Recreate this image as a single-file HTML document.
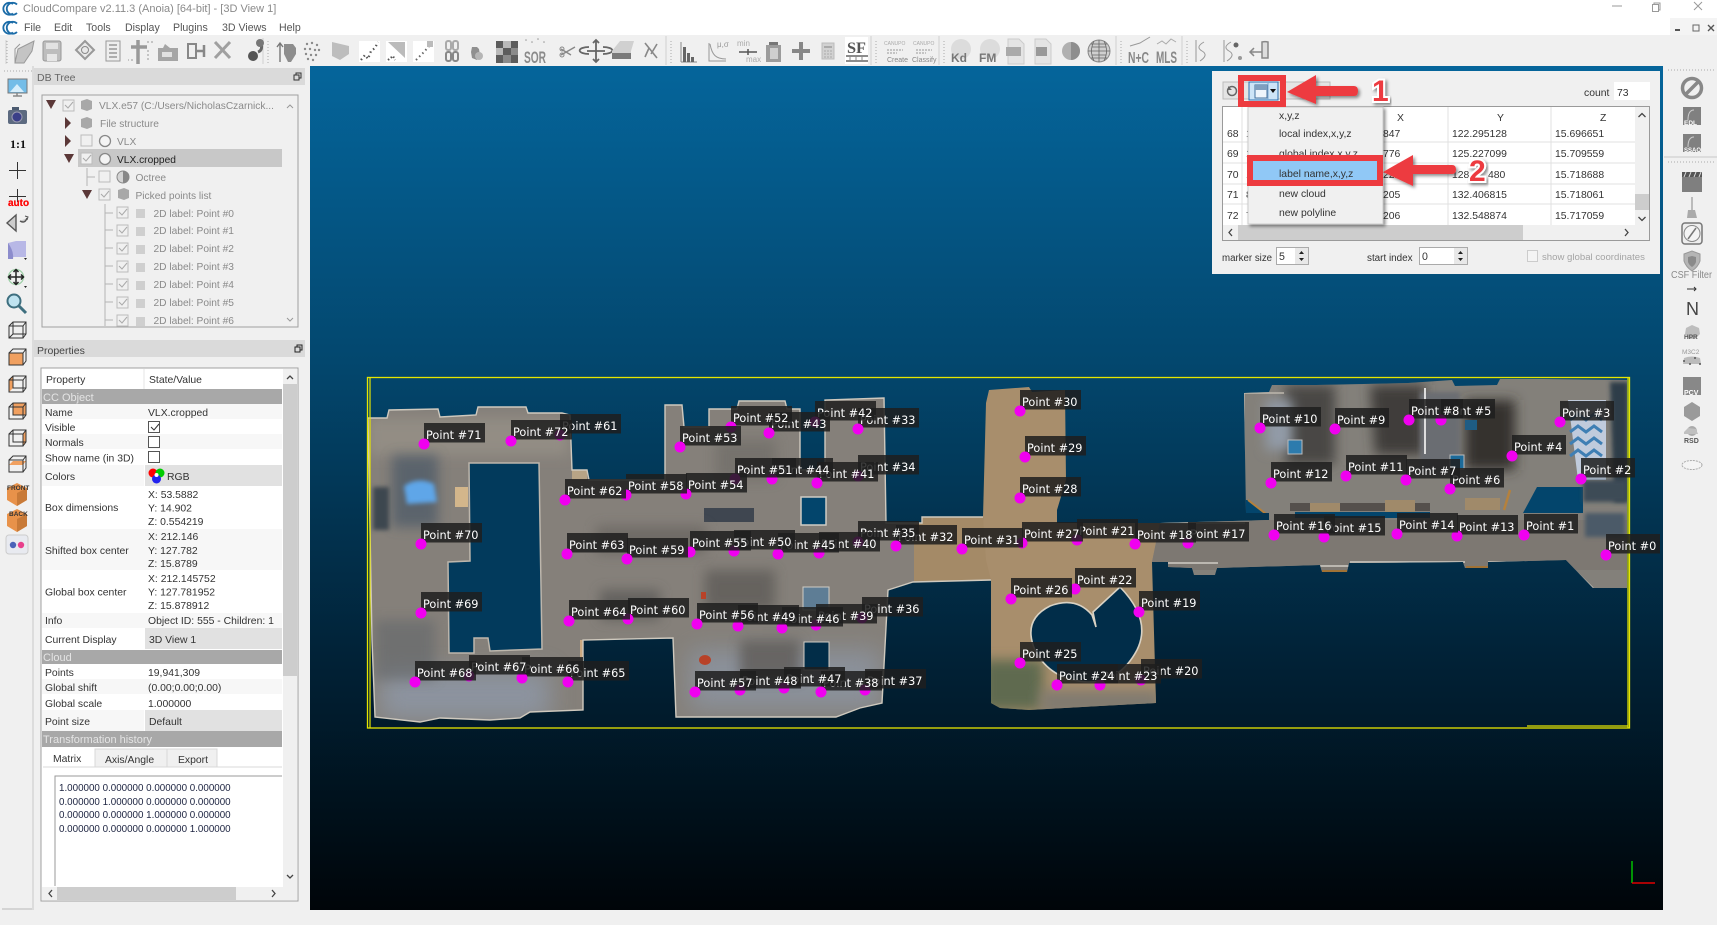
<!DOCTYPE html>
<html><head><meta charset="utf-8"><title>CloudCompare</title>
<style>
html,body{margin:0;padding:0;background:#f0f0f0;overflow:hidden}
svg{display:block;position:absolute;left:0;top:0}
text{font-family:"Liberation Sans",sans-serif;font-size:10.4px;fill:#333;white-space:pre}
.g{fill:#8c8c8c}.t{fill:#2a2a2a}
.m{font-size:10.6px;fill:#555}
.tr{font-size:10.2px;fill:#8a8a8a}
.sec{fill:#e4e4e4;font-size:11px}
.n{font-size:9.7px;fill:#333}
.d{font-size:10.6px;fill:#333}
.l text{font-family:"DejaVu Sans","Liberation Sans",sans-serif;font-size:11.3px;fill:#fff}
.l rect{fill:#1e1e1e;fill-opacity:.86}
.l circle{fill:#f000f0}
.i text{fill:#8a8a8a;font-weight:bold}
</style></head><body>
<svg width="1717" height="925" viewBox="0 0 1717 925" xmlns="http://www.w3.org/2000/svg">
<defs>
<linearGradient id="bg" x1="0" y1="0" x2="0" y2="1"><stop offset="0" stop-color="#05659b"/><stop offset=".35" stop-color="#03476e"/><stop offset=".7" stop-color="#012237"/><stop offset="1" stop-color="#000509"/></linearGradient>
<filter id="b2" x="-30%" y="-30%" width="160%" height="160%"><feGaussianBlur stdDeviation="2"/></filter>
<filter id="b6" x="-50%" y="-50%" width="200%" height="200%"><feGaussianBlur stdDeviation="6"/></filter>
<filter id="b12" x="-50%" y="-50%" width="200%" height="200%"><feGaussianBlur stdDeviation="12"/></filter>
<filter id="sh" x="-10%" y="-10%" width="125%" height="125%"><feDropShadow dx="2" dy="2" stdDeviation="1.5" flood-color="#000" flood-opacity=".45"/></filter>
<clipPath id="fl"><path d="M368 418L387 418 389 410 438 409 440 417 476 415 478 407 526 407 528 413 562 413 570 415 572 470 587 470 589 480 665 480 665 405 682 405 684 427 709 427 709 409 737 409 739 401 785 401 787 409 800 409 800 470 825 470 825 400 884 398 886 523 922 523 922 517 983 517 991 580 913 582 888 590 882 703 860 708 836 717 747 717 676 717 673 638 583 640 583 710 530 712 520 718 490 720 440 718 420 722 375 717 372 640Z"/></clipPath>
<clipPath id="tan"><path d="M986 403L989 390 1029 387 1032 392 1065 390 1066 480 1057 510 1057 523 1160 523 1160 562 1152 562 1156 703 1100 706 1029 710 1000 708 991 703 991 580 986 560 983 517Z"/></clipPath>
<clipPath id="rg"><path d="M1244 393L1269 392 1272 385 1316 385 1408 383 1452 380 1455 386 1497 385 1500 379 1543 379 1627 380 1627 588 1593 588 1566 560 1488 562 1488 568 1465 568 1463 562 1349 563 1347 572 1322 572 1320 565 1217 568 1215 575 1194 575 1192 568 1168 567 1168 562 1152 562 1160 523 1269 520 1269 513 1246 513Z"/></clipPath>
</defs>

<!-- window chrome -->
<rect x="0" y="0" width="1717" height="35" fill="#fff"/>
<rect x="0" y="35" width="1717" height="31" fill="#f0f0f0"/>
<path d="M15 4a6 6 0 1 0 0 9.500M19 4.500a6 6 0 1 0 0 8.500" fill="none" stroke="#1b6ca8" stroke-width="1.800" transform="translate(-2 0)"/>
<text x="23" y="12" style="font-size:11px;fill:#8a8a8a">CloudCompare v2.11.3 (Anoia) [64-bit] - [3D View 1]</text>
<path d="M15 23a6 6 0 1 0 0 9.500M19 23.500a6 6 0 1 0 0 8.500" fill="none" stroke="#1b6ca8" stroke-width="1.800" transform="translate(-2 0)"/>
<text class="m" x="24" y="31">File</text><text class="m" x="54" y="31">Edit</text><text class="m" x="86" y="31">Tools</text><text class="m" x="125" y="31">Display</text><text class="m" x="173" y="31">Plugins</text><text class="m" x="222" y="31">3D Views</text><text class="m" x="279" y="31">Help</text>
<path d="M1612 6h10" stroke="#999"/><rect x="1654" y="3" width="6" height="7" fill="none" stroke="#999"/><rect x="1652.500" y="4.500" width="6" height="7" fill="#fff" stroke="#999"/><path d="M1694 2l8 8M1702 2l-8 8" stroke="#999"/>
<rect x="1670" y="18" width="47" height="17" fill="#f4f4f4"/>
<path d="M1675 30h5" stroke="#555" stroke-width="2"/><rect x="1693" y="25" width="6" height="6" fill="none" stroke="#666"/><path d="M1708 25l6 6M1714 25l-6 6" stroke="#555" stroke-width="1.400"/>

<!-- top toolbar icons -->
<g class="i" fill="#a8a8a8" stroke="none">
<path d="M6 40v24M263 38v26M666 36v29M871 36v29M939 36v29M1116 36v29M1182 36v29" stroke="#d0d0d0"/>
<path d="M7 41v23M268 41v23M671 41v23M876 41v23M944 41v23M1121 41v23M1187 41v23" stroke="#aaa" stroke-dasharray="1 2"/>
<path d="M15 63l3-14 16-8 -2 10 -8 12z" fill="#c4c4c4" stroke="#999"/><path d="M15 63v-14l5-5" fill="none" stroke="#999"/>
<rect x="43" y="41" width="18" height="20" rx="2" fill="#bdbdbd" stroke="#999"/><rect x="46" y="43" width="12" height="6" fill="#e2e2e2"/><rect x="47" y="54" width="10" height="7" fill="#e6e6e6"/>
<path d="M85 41l9 9-9 9-9-9z" fill="#e8e8e8" stroke="#999" stroke-width="2"/><circle cx="85" cy="50" r="3.500" fill="none" stroke="#888"/>
<rect x="106" y="41" width="14" height="20" fill="#eee" stroke="#999"/><path d="M109 45h8M109 49h8M109 53h8M109 57h8" stroke="#888" stroke-width="1.300"/>
<path d="M138 40v24M131 47h16" stroke="#999" stroke-width="3.500"/><path d="M133 60h-5M147 42h6M148 60v-10" stroke="#999" stroke-dasharray="2 2"/>
<path d="M158 48h5l2-4 5 4h8v13h-20z" fill="#a5a5a5"/><rect x="162" y="52" width="10" height="5" fill="#e0e0e0"/>
<rect x="188" y="44" width="8" height="14" fill="none" stroke="#888" stroke-width="2"/><path d="M197 51h7M204 45v12" stroke="#888" stroke-width="2.500"/>
<path d="M215 42l15 16M230 42l-15 16" stroke="#a0a0a0" stroke-width="3"/>
<circle cx="253" cy="56" r="5" fill="#555"/><path d="M258 52q6-2 2-12" fill="none" stroke="#666" stroke-width="3"/><circle cx="260" cy="43" r="4" fill="#777"/>
<path d="M280 62V44M277 47l3-4 3 4" stroke="#777" stroke-width="1.400" fill="none"/><path d="M284 44h9l3 4v6l-5 8h-3l-4-8z" fill="#8d8d8d"/>
<g fill="#8a8a8a"><circle cx="307" cy="44" r="1.200"/><circle cx="312" cy="43" r="1.200"/><circle cx="317" cy="45" r="1.200"/><circle cx="305" cy="49" r="1.200"/><circle cx="310" cy="49" r="1.200"/><circle cx="315" cy="50" r="1.200"/><circle cx="319" cy="50" r="1.200"/><circle cx="306" cy="54" r="1.200"/><circle cx="311" cy="55" r="1.200"/><circle cx="316" cy="55" r="1.200"/><circle cx="308" cy="59" r="1.200"/><circle cx="313" cy="60" r="1.200"/></g>
<path d="M332 42l17 4v8l-9 6-8-4z" fill="#bdbdbd"/>
<rect x="359" y="41" width="21" height="21" fill="#fff"/><path d="M361 60l4-5 3 4 3-8 4-3 3-6" stroke="#555" stroke-width="2.200" stroke-dasharray="1.500 3" fill="none"/>
<rect x="386" y="41" width="21" height="21" fill="#fff"/><path d="M388 42l17 16V42z" fill="#bbb"/><path d="M388 60l5-4 2 4" stroke="#555" stroke-width="2" stroke-dasharray="1.500 2" fill="none"/>
<rect x="413" y="41" width="21" height="21" fill="#fff"/><path d="M416 60l7-7 8-9" stroke="#666" stroke-dasharray="1.500 3" stroke-width="2" fill="none"/><rect x="427" y="41" width="6" height="6" fill="#bbb"/>
<rect x="446" y="41" width="5" height="9" fill="none" stroke="#aaa" stroke-width="2" rx="2"/><rect x="453" y="41" width="5" height="9" fill="none" stroke="#aaa" stroke-width="2" rx="2"/><rect x="446" y="52" width="5" height="9" fill="none" stroke="#888" stroke-width="2" rx="2"/><rect x="453" y="52" width="5" height="9" fill="none" stroke="#888" stroke-width="2" rx="2"/>
<path d="M472 47h5l2 2 1 6-3 5-5-2-1-6z" fill="#8f8f8f"/><circle cx="479" cy="56" r="4" fill="#b5b5b5"/>
<rect x="496" y="41" width="22" height="22" fill="#8a8a8a"/><g fill="#5c5c5c"><rect x="496" y="41" width="7" height="7"/><rect x="511" y="41" width="7" height="7"/><rect x="503" y="48" width="8" height="7"/><rect x="496" y="55" width="7" height="8"/><rect x="511" y="55" width="7" height="8"/></g><g fill="#b9b9b9"><rect x="503" y="41" width="8" height="7"/><rect x="496" y="48" width="7" height="7"/></g>
<g fill="#999"><circle cx="526" cy="40" r=".8"/><circle cx="532" cy="42" r=".8"/><circle cx="538" cy="39" r=".8"/><circle cx="544" cy="42" r=".8"/></g>
<text x="524" y="63" style="font-size:17px;fill:#8a8a8a" textLength="22" lengthAdjust="spacingAndGlyphs">SOR</text>
<path d="M561 55l14-8M561 49l10 6" stroke="#888" stroke-width="1.400" fill="none"/><circle cx="562" cy="49" r="2" fill="none" stroke="#888"/><circle cx="562" cy="55" r="2" fill="none" stroke="#888"/>
<path d="M596 40v21M587 51h18M593 43l3-3 3 3M593 59l3 3 3-3M589 47a8 3 0 0 0 0 7M603 47a8 3 0 0 1 0 7" stroke="#666" stroke-width="1.800" fill="none"/>
<path d="M612 51l8-10h14l-3 10v8h-19z" fill="#d0d0d0"/><path d="M612 53h19v6h-19z" fill="#7a7a7a"/>
<path d="M645 43l12 15M651 54l6-10M649 48l-4 9" stroke="#888" stroke-width="1.600" fill="none"/>
<path d="M681 42v20M681 62h16" stroke="#888" fill="none"/><path d="M683 62V47h3v15zM687 62v-9h3v9zM691 62v-5h3v5z" fill="#666"/>
<path d="M709 43v18h17M710 44c2 11 6 15 16 15" stroke="#999" fill="none"/><text x="717" y="47" style="font-size:8px;font-weight:400;fill:#999">μ,σ</text>
<text x="737" y="46" style="font-size:8px;font-weight:400;fill:#aaa">min</text><path d="M739 52h18M748 49v6" stroke="#555" stroke-width="1.500"/><text x="746" y="62" style="font-size:8px;font-weight:400;fill:#aaa">max</text>
<rect x="766" y="45" width="15" height="17" fill="#9c9c9c"/><rect x="769" y="42" width="9" height="3" fill="#777"/><rect x="770" y="48" width="8" height="11" fill="#cfcfcf"/>
<path d="M801 42v18M792 51h18" stroke="#888" stroke-width="4"/>
<rect x="822" y="43" width="12" height="16" fill="#d2d2d2" stroke="#bbb"/><path d="M824 47h8" stroke="#aaa" stroke-width="2"/><path d="M824 51h8M824 54h8M824 57h8" stroke="#aaa" stroke-dasharray="2 1"/>
<rect x="845" y="37" width="23" height="27" fill="#fff"/><text x="847" y="53" style="font:bold 16px 'Liberation Serif',serif;fill:#555" textLength="19" lengthAdjust="spacingAndGlyphs">SF</text><path d="M846 56h22M846 61h22" stroke="#666" stroke-width="1.500"/><path d="M850 56v5M856 56v5M862 56v5" stroke="#888"/>
<text x="884" y="45" style="font-size:5px;font-weight:400;fill:#aaa">CANUPO</text><text x="913" y="45" style="font-size:5px;font-weight:400;fill:#aaa">CANUPO</text>
<path d="M887 50h16M916 50h16M887 53h10M916 53h10" stroke="#999" stroke-dasharray="2 1"/>
<text x="887" y="62" style="font-size:7px;font-weight:400;fill:#888">Create</text><text x="912" y="62" style="font-size:7px;font-weight:400;fill:#888">Classify</text>
<circle cx="961" cy="49" r="10" fill="#dcdcdc"/><text x="951" y="62" style="font-size:12px;fill:#777">Kd</text>
<circle cx="990" cy="49" r="10" fill="#dcdcdc"/><text x="979" y="62" style="font-size:12px;fill:#777">FM</text>
<path d="M1008 39h11l5 5v20h-16z" fill="#e4e4e4" stroke="#ccc"/><rect x="1006" y="47" width="15" height="9" fill="#aaa"/>
<path d="M1035 39h11l5 5v20h-16z" fill="#e4e4e4" stroke="#ccc"/><rect x="1036" y="47" width="11" height="9" fill="#999"/>
<circle cx="1071" cy="51" r="9" fill="#b0b0b0"/><path d="M1071 42a9 9 0 0 1 0 18z" fill="#8e8e8e"/>
<circle cx="1099" cy="51" r="11" fill="#cfcfcf" stroke="#888"/><path d="M1088 51h22M1099 40v22M1091 44h16M1091 58h16M1092 47h14M1092 55h14M1094 41q-5 10 0 20M1104 41q5 10 0 20" stroke="#666" stroke-width=".8" fill="none"/>
<text x="1128" y="63" style="font-size:16px;fill:#888" textLength="21" lengthAdjust="spacingAndGlyphs">N+C</text><path d="M1130 46l10-3 10-6" stroke="#999" fill="none"/>
<text x="1156" y="63" style="font-size:17px;fill:#888" textLength="21" lengthAdjust="spacingAndGlyphs">MLS</text><path d="M1157 44l5-3 4 3 5-5 5 3" stroke="#aaa" fill="none"/>
<path d="M1196 40v22M1204 42q-9 5-2 9t-2 10" stroke="#999" fill="none"/>
<path d="M1224 40v22M1231 42q-9 5-2 9t-2 10" stroke="#999" fill="none"/><circle cx="1236" cy="45" r="2.500" fill="#666"/><circle cx="1240" cy="58" r="2" fill="#999"/>
<path d="M1262 42a6 2.500 0 0 1 6 0v16h-6zM1250 52h12M1254 48l-4 4 4 4" stroke="#888" fill="#ddd" stroke-width="1.500"/>
</g>

<!-- left toolbar -->
<path d="M33 66v844" stroke="#c8c8c8"/>
<path d="M4 71h28" stroke="#aaa" stroke-dasharray="1 2"/>
<g>
<rect x="8" y="79" width="19" height="14" fill="#74bde8" stroke="#777"/><path d="M10 92l7-8 7 8z" fill="#d7eefb"/><path d="M13 96h9M17 93v3" stroke="#888" stroke-width="1.500"/>
<rect x="8" y="110" width="19" height="14" rx="2" fill="#5c6a80"/><rect x="12" y="107" width="7" height="3" fill="#4b5a70"/><circle cx="17" cy="117" r="5" fill="#3a3f88" stroke="#9a9ab0"/>
<text x="10" y="148" style="font:bold 12px 'Liberation Serif',serif;fill:#111">1:1</text>
<path d="M17.500 162v17M9 170.500h17" stroke="#333"/>
<path d="M17.500 189v13M9 196.500h17" stroke="#333"/><text x="8" y="206" style="font-size:10px;font-weight:bold;fill:#f00;stroke:#f00;stroke-width:.2">auto</text>
<path d="M16 215v16l-9-8zM20 221q5 3 7-3" fill="#ccc" stroke="#555" stroke-width="1.400"/><path d="M25 216l3 1-1 3" fill="none" stroke="#555"/>
<path d="M8 243l8-2h10v16H8z" fill="#b8b8e6"/><path d="M8 243q6 8 5 16H8z" fill="#8c8ccc"/><path d="M24 258l3 0-1.500 2z" fill="#222"/>
<circle cx="16" cy="277" r="7.500" fill="#f0f0f0" stroke="#9fd0a8" stroke-width="1.300"/><path d="M16 270v15M9 277h15M13.500 272l2.500-2.500 2.500 2.500M13.500 282l2.500 2.500 2.500-2.500M11 274.500l-2.500 2.500 2.500 2.500M21 274.500l2.500 2.500-2.500 2.500" stroke="#222" stroke-width="1.500" fill="none"/><path d="M24 286l3 0-1.500 2z" fill="#222"/>
<circle cx="14" cy="301" r="6.500" fill="#bfe3f0" stroke="#3e6f7f" stroke-width="2"/><path d="M19 306l7 7" stroke="#3e6f7f" stroke-width="3"/>
<g fill="none" stroke="#333" stroke-width="1"><rect x="9" y="326" width="14" height="12"/><path d="M9 326l4-4h13v12l-3 4M23 326l3-4M13 322v12h13M13 334l-4 4"/></g>
<rect x="9" y="353" width="14" height="12" fill="#f0a060"/><g fill="none" stroke="#333"><rect x="9" y="353" width="14" height="12"/><path d="M9 353l4-4h13v12l-3 4M23 353l3-4"/></g>
<path d="M9 380l4-4v12l-4 4z" fill="#f0a060"/><g fill="none" stroke="#333"><rect x="9" y="380" width="14" height="12"/><path d="M9 380l4-4h13v12l-3 4M23 380l3-4M13 376v12h13"/></g>
<rect x="13" y="403" width="13" height="12" fill="#f0a060"/><g fill="none" stroke="#333"><rect x="9" y="407" width="14" height="12"/><path d="M9 407l4-4h13v12l-3 4M23 407l3-4M13 403v12h13"/></g>
<path d="M23 434l3-4v12l-3 4z" fill="#f0a060"/><g fill="none" stroke="#333"><rect x="9" y="434" width="14" height="12"/><path d="M9 434l4-4h13v12l-3 4M23 434l3-4M13 430v12h13"/></g>
<path d="M9 469l4-4h13l-3 4z" fill="#f0a060" transform="translate(0 -4)"/><g fill="none" stroke="#333"><rect x="9" y="460" width="14" height="12"/><path d="M9 460l4-4h13v12l-3 4M23 460l3-4"/></g>
<path d="M7 488l10-5 10 5v12l-10 6-10-6z" fill="#e8924a"/><path d="M17 493v13l10-6v-12z" fill="#c87a38"/><text x="7" y="490" style="font-size:6.500px;font-weight:bold;fill:#333">FRONT</text>
<path d="M7 514l10-5 10 5v12l-10 6-10-6z" fill="#e8924a"/><path d="M17 519v13l10-6v-12z" fill="#c87a38"/><text x="9" y="516" style="font-size:6.500px;font-weight:bold;fill:#333">BACK</text>
<rect x="6" y="535" width="22" height="19" rx="3" fill="#e8eaf0" stroke="#ccc"/><circle cx="13" cy="545" r="3.200" fill="#4a62b8"/><circle cx="21" cy="545" r="3.200" fill="#e8408c"/>
</g>

<!-- DB Tree -->
<rect x="34" y="68" width="271" height="17" fill="#dadada"/>
<text x="37" y="81" class="g" style="font-size:10.500px;fill:#666">DB Tree</text>
<g fill="none" stroke="#333"><rect x="296" y="73" width="5" height="5"/><rect x="294" y="75" width="5" height="5" fill="#dadada"/></g>
<rect x="42" y="95" width="256" height="232" fill="#f0f0f0" stroke="#a0a0a0"/>
<rect x="78" y="149" width="204" height="18" fill="#c8c8c8"/>
<g fill="none" stroke="#b4b4b4"><path d="M87 168v18M87 177h8M105 204v122M105 213h8M105 230h8M105 248h8M105 266h8M105 284h8M105 302h8M105 320h8"/></g>
<g fill="#5b3838"><path d="M46 100h10l-5 9zM65 117v12l6-6zM65 135v12l6-6zM64 154h10l-5 9zM82 190h10l-5 9z"/></g>
<g fill="#f0f0f0" stroke="#bbb"><rect x="63" y="100" width="11" height="11"/><rect x="81" y="135" width="11" height="11"/><rect x="81" y="153" width="11" height="11"/><rect x="99" y="171" width="11" height="11"/><rect x="99" y="189" width="11" height="11"/><rect x="117" y="207" width="11" height="11"/><rect x="117" y="225" width="11" height="11"/><rect x="117" y="243" width="11" height="11"/><rect x="117" y="261" width="11" height="11"/><rect x="117" y="279" width="11" height="11"/><rect x="117" y="297" width="11" height="11"/><rect x="117" y="315" width="11" height="11"/></g>
<g fill="none" stroke="#aaa"><path d="M65 105l3 3 5-6M83 158l3 3 5-6M101 194l3 3 5-6M119 212l3 3 5-6M119 230l3 3 5-6M119 248l3 3 5-6M119 266l3 3 5-6M119 284l3 3 5-6M119 302l3 3 5-6M119 320l3 3 5-6"/></g>
<g fill="#a8a8a8"><path d="M81 101l6-2 5 2v8l-5 2-6-2zM81 119l6-2 5 2v8l-5 2-6-2zM118 190l6-2 5 2v8l-5 2-6-2z"/></g>
<g fill="#f4f4f4" stroke="#888" stroke-width="1.300"><circle cx="105" cy="141" r="5.500"/><circle cx="105" cy="159" r="5.500"/></g>
<circle cx="123" cy="177" r="6" fill="#d4d4d4" stroke="#888"/><path d="M123 171a6 6 0 0 1 0 12z" fill="#888"/>
<g fill="#cfcfcf"><rect x="136" y="209" width="9" height="9"/><rect x="136" y="227" width="9" height="9"/><rect x="136" y="245" width="9" height="9"/><rect x="136" y="263" width="9" height="9"/><rect x="136" y="281" width="9" height="9"/><rect x="136" y="299" width="9" height="9"/><rect x="136" y="317" width="9" height="9"/></g>
<text class="tr" x="99" y="109">VLX.e57 (C:/Users/NicholasCzarnick...</text>
<text class="tr" x="100" y="127">File structure</text><text class="tr" x="117" y="145">VLX</text>
<text class="tr" x="117" y="163" style="fill:#222">VLX.cropped</text><text class="tr" x="135.500" y="181">Octree</text><text class="tr" x="135.500" y="199">Picked points list</text>
<text class="tr" x="153.500" y="217">2D label: Point #0</text><text class="tr" x="153.500" y="234">2D label: Point #1</text><text class="tr" x="153.500" y="252">2D label: Point #2</text><text class="tr" x="153.500" y="270">2D label: Point #3</text><text class="tr" x="153.500" y="288">2D label: Point #4</text><text class="tr" x="153.500" y="306">2D label: Point #5</text><text class="tr" x="153.500" y="324">2D label: Point #6</text>
<path d="M287 108l3-3 3 3M287 318l3 3 3-3" fill="none" stroke="#999"/>

<!-- Properties -->
<rect x="34" y="340" width="271" height="17" fill="#dadada"/>
<text x="37" y="354" style="font-size:10.500px;fill:#444">Properties</text>
<g fill="none" stroke="#222"><rect x="297" y="345" width="5" height="5"/><rect x="295" y="347" width="5" height="5" fill="#dadada"/></g>
<rect x="41" y="368" width="257" height="533" fill="#fff" stroke="#a0a0a0"/>
<rect x="283" y="369" width="14" height="531" fill="#f0f0f0"/><rect x="283" y="384" width="14" height="292" fill="#cdcdcd"/>
<path d="M287 379l3-3 3 3M287 875l3 3 3-3" fill="none" stroke="#444" stroke-width="1.300"/>
<path d="M144 369v20" stroke="#e4e4e4"/>
<g fill="#a8a8a8"><rect x="42" y="389" width="240" height="15"/><rect x="42" y="650" width="240" height="14"/><rect x="42" y="731" width="240" height="16"/></g>
<g fill="#f7f7f7"><rect x="42" y="404" width="240" height="15"/><rect x="42" y="434" width="240" height="15"/><rect x="42" y="465" width="102" height="21"/><rect x="42" y="529" width="240" height="41"/><rect x="42" y="613" width="240" height="15"/><rect x="42" y="679" width="240" height="15"/><rect x="42" y="710" width="102" height="21"/></g>
<g fill="#e1e1e1"><rect x="145" y="465" width="137" height="21"/><rect x="145" y="628" width="137" height="21"/><rect x="145" y="710" width="137" height="21"/></g>
<g fill="#fff" stroke="#555"><rect x="148.500" y="421.500" width="11" height="11"/><rect x="148.500" y="436.500" width="11" height="11"/><rect x="148.500" y="451.500" width="11" height="11"/></g>
<path d="M151 427l3 3 5-6" fill="none" stroke="#333"/>
<circle cx="153" cy="473" r="4.500" fill="#f00"/><circle cx="160" cy="473" r="4.500" fill="#0c0"/><circle cx="156.500" cy="479" r="4.500" fill="#22e"/><circle cx="156.500" cy="475" r="2" fill="#fff"/>
<g class="d" style="font-size:10.300px">
<text x="46" y="383">Property</text><text x="149" y="383">State/Value</text>
<text class="sec" x="43" y="401">CC Object</text>
<text x="45" y="416">Name</text><text x="148" y="416">VLX.cropped</text>
<text x="45" y="431">Visible</text><text x="45" y="446">Normals</text><text x="45" y="461.500">Show name (in 3D)</text>
<text x="45" y="480">Colors</text><text x="167" y="480">RGB</text>
<text x="45" y="511">Box dimensions</text><text x="148" y="498">X: 53.5882</text><text x="148" y="511.500">Y: 14.902</text><text x="148" y="525">Z: 0.554219</text>
<text x="45" y="554">Shifted box center</text><text x="148" y="540">X: 212.146</text><text x="148" y="554">Y: 127.782</text><text x="148" y="567">Z: 15.8789</text>
<text x="45" y="595.500">Global box center</text><text x="148" y="582">X: 212.145752</text><text x="148" y="595.500">Y: 127.781952</text><text x="148" y="609">Z: 15.878912</text>
<text x="45" y="624">Info</text><text x="148" y="624">Object ID: 555 - Children: 1</text>
<text x="45" y="643">Current Display</text><text x="149" y="643">3D View 1</text>
<text class="sec" x="43" y="661">Cloud</text>
<text x="45" y="676">Points</text><text x="148" y="676">19,941,309</text>
<text x="45" y="691">Global shift</text><text x="148" y="691">(0.00;0.00;0.00)</text>
<text x="45" y="707">Global scale</text><text x="148" y="707">1.000000</text>
<text x="45" y="725">Point size</text><text x="149" y="725">Default</text>
<text class="sec" x="43" y="743">Transformation history</text>
</g>
<rect x="95" y="749" width="72" height="18" fill="#f0f0f0" stroke="#d8d8d8"/><rect x="167" y="749" width="50" height="18" fill="#f0f0f0" stroke="#d8d8d8"/>
<path d="M43 767h52M217 767h65" stroke="#d8d8d8"/>
<g class="d" style="font-size:10.300px"><text x="53" y="762">Matrix</text><text x="105" y="763">Axis/Angle</text><text x="178" y="763">Export</text></g>
<path d="M282 776H55V886" fill="none" stroke="#999"/>
<g><text x="59" y="791" style="font-size:9.800px;fill:#1c2340">1.000000 0.000000 0.000000 0.000000</text><text x="59" y="805" style="font-size:9.800px;fill:#1c2340">0.000000 1.000000 0.000000 0.000000</text><text x="59" y="818" style="font-size:9.800px;fill:#1c2340">0.000000 0.000000 1.000000 0.000000</text><text x="59" y="832" style="font-size:9.800px;fill:#1c2340">0.000000 0.000000 0.000000 1.000000</text></g>
<rect x="42" y="887" width="241" height="13" fill="#f0f0f0"/><rect x="57" y="887" width="179" height="13" fill="#cdcdcd"/>
<path d="M52 890l-3 3.500 3 3.500M272 890l3 3.500-3 3.500" fill="none" stroke="#444" stroke-width="1.300"/>
<path d="M2 909h30" stroke="#b8b8b8"/>

<!-- 3D view -->
<rect x="310" y="66" width="1353" height="844" fill="url(#bg)"/>

<!-- floor plan -->
<g>
<g clip-path="url(#fl)">
<rect x="360" y="395" width="640" height="330" fill="#85807a"/>
<rect x="914" y="510" width="80" height="80" fill="#a48a67"/>
<path d="M368 418h200v37h-200z" fill="#938d84" filter="url(#b6)"/>
<path d="M392 455h46v72h-46z" fill="#4e5a68" filter="url(#b6)" opacity=".75"/>
<path d="M404 486q14-10 30-2l3 18-30 2z" fill="#5fa6e8" filter="url(#b2)"/>
<rect x="455" y="487" width="13" height="20" fill="#d3b68b"/>
<rect x="373" y="487" width="16" height="43" fill="#3c4650" filter="url(#b2)"/>
<path d="M380 670h170v50h-170z" fill="#8e98a8" filter="url(#b12)" opacity=".8"/>
<path d="M690 650h190v60h-190z" fill="#8e9aac" filter="url(#b12)" opacity=".65"/>
<path d="M375 620h60v60h-60z" fill="#62666a" filter="url(#b6)" opacity=".6"/>
<path d="M600 590h60v30h-60z" fill="#5c5a58" filter="url(#b6)" opacity=".8"/>
<path d="M705 570h70v40h-70zM740 640h60v40h-60z" fill="#5f5c59" filter="url(#b6)" opacity=".8"/>
<rect x="704" y="508" width="50" height="14" fill="#3f4650"/>
<path d="M596 526h110v28h-110z" fill="#6b6662" filter="url(#b6)" opacity=".8"/>
<path d="M716 440h60v40h-60z" fill="#6b6763" filter="url(#b6)" opacity=".55"/>
<ellipse cx="705" cy="660" rx="6" ry="5" fill="#b84228"/>
<rect x="701" y="592" width="5" height="7" fill="#b84228"/>
<rect x="580" y="640" width="15" height="18" fill="#caa880"/>
<rect x="492" y="463" width="15" height="14" fill="#b7a68f"/><rect x="572" y="470" width="15" height="10" fill="#b8a486"/>
</g>
<path d="M372 640L368 418 387 418 389 410 438 409 440 417 476 415 478 407 526 407 528 413 562 413 570 415 572 470 587 470 589 480 665 480 665 405 682 405 684 427 709 427 709 409 737 409 739 401 785 401 787 409 800 409 800 470 825 470 825 400 884 398 886 523 922 523 922 517 983 517M991 580L913 582 888 590 882 703 860 708 836 717 747 717 676 717 673 638 583 640 583 710 530 712 520 718 490 720 440 718 420 722 375 717 372 640" fill="none" stroke="#cfc9be" stroke-width="1.400"/>
<g>
<path d="M469 463L539 463 542 649 490 651 488 638 474 638 474 653 449 653 448 562 470 561Z" fill="#023a5c" stroke="#bdb6ac" stroke-width="1.500"/>
<rect x="801" y="497" width="25" height="28" fill="#03456c" stroke="#d0ccc4" stroke-width="1.500"/>
<path d="M803 587h26v23h-26z" fill="#5e7d95" stroke="#d0ccc4"/>
<rect x="804" y="642" width="25" height="28" fill="#022d48" stroke="#d0ccc4"/>
</g>
<g clip-path="url(#tan)"><rect x="980" y="380" width="190" height="335" fill="#a88e6c"/><rect x="983" y="660" width="60" height="50" fill="#5f6a50" filter="url(#b6)"/><rect x="1040" y="690" width="120" height="25" fill="#817a70" filter="url(#b6)"/></g>
<path d="M1120 587Q1152 620 1137 650 1120 682 1088 682 1050 680 1035 650 1022 620 1050 606 1076 596 1092 615L1096 627 1093 612Z" fill="#012d49" stroke="#d9d2c4" stroke-width="1.600"/>
<g clip-path="url(#rg)"><rect x="1150" y="375" width="490" height="220" fill="#83807a"/>
<rect x="1150" y="520" width="490" height="50" fill="#7d7872"/>
<path d="M1285 385h50v80h-50z" fill="#4a4744" filter="url(#b6)"/>
<path d="M1370 385h55v70h-50z" fill="#3f3c3a" filter="url(#b6)"/>
<path d="M1465 400h50v70h-50z" fill="#34322f" filter="url(#b6)"/>
<path d="M1420 392h40v80h-40z" fill="#6a6d72" filter="url(#b2)"/>
<path d="M1266 400h26v50h-26z" fill="#929ba8" filter="url(#b6)"/>
<path d="M1568 400h38v80h-28z" fill="#c0cbdc"/><path d="M1570 420l8-6 8 6 8-6 8 6M1570 432l8-6 8 6 8-6 8 6M1570 444l8-6 8 6 8-6 8 6M1570 456l8-6 8 6 8-6 8 6" fill="none" stroke="#3f7fb4" stroke-width="3"/>
<path d="M1610 382h18v120h-14z" fill="#2f3d48" filter="url(#b2)"/>
<path d="M1290 503h140v8h-140z" fill="#55504c"/><path d="M1310 503h30v9h-30zM1385 500h30v12h-30zM1465 498h35v12h-35z" fill="#a08a6a"/>
<rect x="1295" y="512" width="135" height="6" fill="#03456c"/>
<path d="M1248 500L1267 515 1245 517 1244 500Z" fill="#03456c"/><path d="M1537 487h46v26h-60z" fill="#03456c"/><path d="M1583 480h44v22h-44z" fill="#3d4b57" filter="url(#b2)"/><path d="M1585 513h40v24h-40z" fill="#4b5a68" filter="url(#b2)"/>
<rect x="1465" y="420" width="12" height="10" fill="#1e5c84"/><rect x="1450" y="455" width="14" height="14" fill="#1c6a99" stroke="#bbb"/><rect x="1288" y="440" width="14" height="14" fill="#2d7bad" stroke="#bbb"/>
<path d="M1425 388v66" stroke="#ddd" stroke-width="2"/><path d="M1510 490l-6 20" stroke="#b5813c" stroke-width="2.500"/>
<path d="M1248 500l18 14" stroke="#b5813c" stroke-width="2"/>
<path d="M1244 393h40M1244 393v120M1160 523h85" stroke="#bdb7ad" stroke-width="1.500" fill="none"/>
<path d="M1168 563h50M1320 566h29M1350 562h115M1488 562h78l27 26" stroke="#d0ccc4" stroke-width="1.500" fill="none"/>
<path d="M1322 571h25M1466 567h22" stroke="#a07236" stroke-width="2"/>
</g>
</g>

<!-- yellow bounding box -->
<rect x="367.500" y="377.500" width="1262" height="350.500" fill="none" stroke="#e6e600" stroke-width="1.300"/>
<path d="M370 378v350M1628 378v350M1527 726h101" fill="none" stroke="#e6e600" stroke-width="1.200"/>

<!-- labels -->
<g class="l">
<g transform="translate(1606 555)"><rect y="-21" width="54" height="19.500"/><circle r="5.500"/><text x="2" y="-5">Point #0</text></g>
<g transform="translate(1524 535)"><rect y="-21" width="54" height="19.500"/><circle r="5.500"/><text x="2" y="-5">Point #1</text></g>
<g transform="translate(1581 479)"><rect y="-21" width="54" height="19.500"/><circle r="5.500"/><text x="2" y="-5">Point #2</text></g>
<g transform="translate(1560 422)"><rect y="-21" width="54" height="19.500"/><circle r="5.500"/><text x="2" y="-5">Point #3</text></g>
<g transform="translate(1512 456)"><rect y="-21" width="54" height="19.500"/><circle r="5.500"/><text x="2" y="-5">Point #4</text></g>
<g transform="translate(1441 420)"><rect y="-21" width="54" height="19.500"/><circle r="5.500"/><text x="2" y="-5">Point #5</text></g>
<g transform="translate(1450 489)"><rect y="-21" width="54" height="19.500"/><circle r="5.500"/><text x="2" y="-5">Point #6</text></g>
<g transform="translate(1406 480)"><rect y="-21" width="54" height="19.500"/><circle r="5.500"/><text x="2" y="-5">Point #7</text></g>
<g transform="translate(1409 420)"><rect y="-21" width="54" height="19.500"/><circle r="5.500"/><text x="2" y="-5">Point #8</text></g>
<g transform="translate(1335 429)"><rect y="-21" width="54" height="19.500"/><circle r="5.500"/><text x="2" y="-5">Point #9</text></g>
<g transform="translate(1260 428)"><rect y="-21" width="61" height="19.500"/><circle r="5.500"/><text x="2" y="-5">Point #10</text></g>
<g transform="translate(1346 476)"><rect y="-21" width="61" height="19.500"/><circle r="5.500"/><text x="2" y="-5">Point #11</text></g>
<g transform="translate(1271 483)"><rect y="-21" width="61" height="19.500"/><circle r="5.500"/><text x="2" y="-5">Point #12</text></g>
<g transform="translate(1457 536)"><rect y="-21" width="61" height="19.500"/><circle r="5.500"/><text x="2" y="-5">Point #13</text></g>
<g transform="translate(1397 534)"><rect y="-21" width="61" height="19.500"/><circle r="5.500"/><text x="2" y="-5">Point #14</text></g>
<g transform="translate(1324 537)"><rect y="-21" width="61" height="19.500"/><circle r="5.500"/><text x="2" y="-5">Point #15</text></g>
<g transform="translate(1274 535)"><rect y="-21" width="61" height="19.500"/><circle r="5.500"/><text x="2" y="-5">Point #16</text></g>
<g transform="translate(1188 543)"><rect y="-21" width="61" height="19.500"/><circle r="5.500"/><text x="2" y="-5">Point #17</text></g>
<g transform="translate(1135 544)"><rect y="-21" width="61" height="19.500"/><circle r="5.500"/><text x="2" y="-5">Point #18</text></g>
<g transform="translate(1139 612)"><rect y="-21" width="61" height="19.500"/><circle r="5.500"/><text x="2" y="-5">Point #19</text></g>
<g transform="translate(1141 680)"><rect y="-21" width="61" height="19.500"/><circle r="5.500"/><text x="2" y="-5">Point #20</text></g>
<g transform="translate(1077 540)"><rect y="-21" width="61" height="19.500"/><circle r="5.500"/><text x="2" y="-5">Point #21</text></g>
<g transform="translate(1075 589)"><rect y="-21" width="61" height="19.500"/><circle r="5.500"/><text x="2" y="-5">Point #22</text></g>
<g transform="translate(1100 685)"><rect y="-21" width="61" height="19.500"/><circle r="5.500"/><text x="2" y="-5">Point #23</text></g>
<g transform="translate(1057 685)"><rect y="-21" width="61" height="19.500"/><circle r="5.500"/><text x="2" y="-5">Point #24</text></g>
<g transform="translate(1020 663)"><rect y="-21" width="61" height="19.500"/><circle r="5.500"/><text x="2" y="-5">Point #25</text></g>
<g transform="translate(1011 599)"><rect y="-21" width="61" height="19.500"/><circle r="5.500"/><text x="2" y="-5">Point #26</text></g>
<g transform="translate(1022 543)"><rect y="-21" width="61" height="19.500"/><circle r="5.500"/><text x="2" y="-5">Point #27</text></g>
<g transform="translate(1020 498)"><rect y="-21" width="61" height="19.500"/><circle r="5.500"/><text x="2" y="-5">Point #28</text></g>
<g transform="translate(1025 457)"><rect y="-21" width="61" height="19.500"/><circle r="5.500"/><text x="2" y="-5">Point #29</text></g>
<g transform="translate(1020 411)"><rect y="-21" width="61" height="19.500"/><circle r="5.500"/><text x="2" y="-5">Point #30</text></g>
<g transform="translate(962 549)"><rect y="-21" width="61" height="19.500"/><circle r="5.500"/><text x="2" y="-5">Point #31</text></g>
<g transform="translate(896 546)"><rect y="-21" width="61" height="19.500"/><circle r="5.500"/><text x="2" y="-5">Point #32</text></g>
<g transform="translate(858 429)"><rect y="-21" width="61" height="19.500"/><circle r="5.500"/><text x="2" y="-5">Point #33</text></g>
<g transform="translate(858 476)"><rect y="-21" width="61" height="19.500"/><circle r="5.500"/><text x="2" y="-5">Point #34</text></g>
<g transform="translate(858 542)"><rect y="-21" width="61" height="19.500"/><circle r="5.500"/><text x="2" y="-5">Point #35</text></g>
<g transform="translate(862 618)"><rect y="-21" width="61" height="19.500"/><circle r="5.500"/><text x="2" y="-5">Point #36</text></g>
<g transform="translate(865 690)"><rect y="-21" width="61" height="19.500"/><circle r="5.500"/><text x="2" y="-5">Point #37</text></g>
<g transform="translate(821 692)"><rect y="-21" width="61" height="19.500"/><circle r="5.500"/><text x="2" y="-5">Point #38</text></g>
<g transform="translate(816 625)"><rect y="-21" width="61" height="19.500"/><circle r="5.500"/><text x="2" y="-5">Point #39</text></g>
<g transform="translate(819 553)"><rect y="-21" width="61" height="19.500"/><circle r="5.500"/><text x="2" y="-5">Point #40</text></g>
<g transform="translate(817 483)"><rect y="-21" width="61" height="19.500"/><circle r="5.500"/><text x="2" y="-5">Point #41</text></g>
<g transform="translate(815 422)"><rect y="-21" width="61" height="19.500"/><circle r="5.500"/><text x="2" y="-5">Point #42</text></g>
<g transform="translate(769 433)"><rect y="-21" width="61" height="19.500"/><circle r="5.500"/><text x="2" y="-5">Point #43</text></g>
<g transform="translate(772 479)"><rect y="-21" width="61" height="19.500"/><circle r="5.500"/><text x="2" y="-5">Point #44</text></g>
<g transform="translate(778 554)"><rect y="-21" width="61" height="19.500"/><circle r="5.500"/><text x="2" y="-5">Point #45</text></g>
<g transform="translate(782 628)"><rect y="-21" width="61" height="19.500"/><circle r="5.500"/><text x="2" y="-5">Point #46</text></g>
<g transform="translate(784 688)"><rect y="-21" width="61" height="19.500"/><circle r="5.500"/><text x="2" y="-5">Point #47</text></g>
<g transform="translate(740 690)"><rect y="-21" width="61" height="19.500"/><circle r="5.500"/><text x="2" y="-5">Point #48</text></g>
<g transform="translate(738 626)"><rect y="-21" width="61" height="19.500"/><circle r="5.500"/><text x="2" y="-5">Point #49</text></g>
<g transform="translate(734 551)"><rect y="-21" width="61" height="19.500"/><circle r="5.500"/><text x="2" y="-5">Point #50</text></g>
<g transform="translate(735 479)"><rect y="-21" width="61" height="19.500"/><circle r="5.500"/><text x="2" y="-5">Point #51</text></g>
<g transform="translate(731 427)"><rect y="-21" width="61" height="19.500"/><circle r="5.500"/><text x="2" y="-5">Point #52</text></g>
<g transform="translate(680 447)"><rect y="-21" width="61" height="19.500"/><circle r="5.500"/><text x="2" y="-5">Point #53</text></g>
<g transform="translate(686 494)"><rect y="-21" width="61" height="19.500"/><circle r="5.500"/><text x="2" y="-5">Point #54</text></g>
<g transform="translate(690 552)"><rect y="-21" width="61" height="19.500"/><circle r="5.500"/><text x="2" y="-5">Point #55</text></g>
<g transform="translate(697 624)"><rect y="-21" width="61" height="19.500"/><circle r="5.500"/><text x="2" y="-5">Point #56</text></g>
<g transform="translate(695 692)"><rect y="-21" width="61" height="19.500"/><circle r="5.500"/><text x="2" y="-5">Point #57</text></g>
<g transform="translate(626 495)"><rect y="-21" width="61" height="19.500"/><circle r="5.500"/><text x="2" y="-5">Point #58</text></g>
<g transform="translate(627 559)"><rect y="-21" width="61" height="19.500"/><circle r="5.500"/><text x="2" y="-5">Point #59</text></g>
<g transform="translate(628 619)"><rect y="-21" width="61" height="19.500"/><circle r="5.500"/><text x="2" y="-5">Point #60</text></g>
<g transform="translate(560 435)"><rect y="-21" width="61" height="19.500"/><circle r="5.500"/><text x="2" y="-5">Point #61</text></g>
<g transform="translate(565 500)"><rect y="-21" width="61" height="19.500"/><circle r="5.500"/><text x="2" y="-5">Point #62</text></g>
<g transform="translate(567 554)"><rect y="-21" width="61" height="19.500"/><circle r="5.500"/><text x="2" y="-5">Point #63</text></g>
<g transform="translate(569 621)"><rect y="-21" width="61" height="19.500"/><circle r="5.500"/><text x="2" y="-5">Point #64</text></g>
<g transform="translate(568 682)"><rect y="-21" width="61" height="19.500"/><circle r="5.500"/><text x="2" y="-5">Point #65</text></g>
<g transform="translate(522 678)"><rect y="-21" width="61" height="19.500"/><circle r="5.500"/><text x="2" y="-5">Point #66</text></g>
<g transform="translate(469 676)"><rect y="-21" width="61" height="19.500"/><circle r="5.500"/><text x="2" y="-5">Point #67</text></g>
<g transform="translate(415 682)"><rect y="-21" width="61" height="19.500"/><circle r="5.500"/><text x="2" y="-5">Point #68</text></g>
<g transform="translate(421 613)"><rect y="-21" width="61" height="19.500"/><circle r="5.500"/><text x="2" y="-5">Point #69</text></g>
<g transform="translate(421 544)"><rect y="-21" width="61" height="19.500"/><circle r="5.500"/><text x="2" y="-5">Point #70</text></g>
<g transform="translate(424 444)"><rect y="-21" width="61" height="19.500"/><circle r="5.500"/><text x="2" y="-5">Point #71</text></g>
<g transform="translate(511 441)"><rect y="-21" width="61" height="19.500"/><circle r="5.500"/><text x="2" y="-5">Point #72</text></g>
</g>

<!-- axis trihedron -->
<path d="M1632 883v-22" stroke="#00c000" stroke-width="1.500"/><path d="M1632 883h23" stroke="#e00000" stroke-width="1.500"/>

<!-- floating point-list dialog -->
<rect x="1212" y="71" width="448" height="203" fill="#f0f0f0"/>
<rect x="1223" y="82" width="107" height="17" fill="#e4e4e4" stroke="#bbb"/>
<circle cx="1232" cy="91" r="4.500" fill="none" stroke="#666" stroke-width="1.500"/><path d="M1230 88l-2-2v4h4" fill="#666"/>
<text class="d" x="1584" y="96" style="font-size:10.400px">count</text><rect x="1614" y="82" width="36" height="18" fill="#fff"/><text class="d" x="1617" y="96" style="font-size:10.400px">73</text>
<rect x="1222.500" y="106.500" width="427" height="134" fill="#fff" stroke="#9a9a9a"/>
<g stroke="#e0e0e0"><path d="M1223 142h412M1223 163h412M1223 184h412M1223 204h412M1448 107v118M1551 107v118M1242 107v118"/></g>
<g class="n"><text x="1397" y="121">X</text><text x="1497" y="121">Y</text><text x="1600" y="121">Z</text></g>
<g class="n" style="font-size:9.800px">
<text x="1227" y="137">68</text><text x="1246" y="137">1</text><text x="1383" y="137">847</text><text x="1452" y="137">122.295128</text><text x="1555" y="137">15.696651</text>
<text x="1227" y="157">69</text><text x="1246" y="157">1</text><text x="1383" y="157">776</text><text x="1452" y="157">125.227099</text><text x="1555" y="157">15.709559</text>
<text x="1227" y="178">70</text><text x="1246" y="178">1</text><text x="1383" y="178">221</text><text x="1452" y="178">128.</text><text x="1488" y="178">480</text><text x="1555" y="178">15.718688</text>
<text x="1227" y="198">71</text><text x="1246" y="198">8</text><text x="1383" y="198">205</text><text x="1452" y="198">132.406815</text><text x="1555" y="198">15.718061</text>
<text x="1227" y="219">72</text><text x="1246" y="219">7</text><text x="1383" y="219">206</text><text x="1452" y="219">132.548874</text><text x="1555" y="219">15.717059</text>
</g>
<rect x="1635" y="107" width="14" height="118" fill="#f0f0f0"/><rect x="1635" y="194" width="14" height="16" fill="#cdcdcd"/>
<path d="M1638.500 117l3.500-3.500 3.500 3.500M1638.500 217l3.500 3.500 3.500-3.500" fill="none" stroke="#444" stroke-width="1.300"/>
<rect x="1223" y="225" width="426" height="15" fill="#f0f0f0"/><rect x="1238" y="225" width="285" height="15" fill="#cdcdcd"/>
<path d="M1232 229l-3 3.500 3 3.500M1625 229l3 3.500-3 3.500" fill="none" stroke="#444" stroke-width="1.300"/>
<text class="d" x="1222" y="261" style="font-size:9.700px">marker size</text>
<rect x="1276.500" y="247.500" width="32" height="17" fill="#fff" stroke="#aaa"/><rect x="1295" y="248" width="13" height="16" fill="#e8e8e8"/><path d="M1299 254l2.500-3 2.500 3zM1299 258l2.500 3 2.500-3z" fill="#222"/><text class="d" x="1279" y="260">5</text>
<text class="d" x="1367" y="261" style="font-size:9.900px">start index</text>
<rect x="1419.500" y="247.500" width="48" height="17" fill="#fff" stroke="#aaa"/><rect x="1454" y="248" width="13" height="16" fill="#e8e8e8"/><path d="M1458 254l2.500-3 2.500 3zM1458 258l2.500 3 2.500-3z" fill="#222"/><text class="d" x="1422" y="260">0</text>
<rect x="1527.500" y="250.500" width="10" height="11" fill="#f4f4f4" stroke="#ccc"/>
<text x="1542" y="260" style="font-size:9.600px;fill:#a4a4a4">show global coordinates</text>

<!-- menu -->
<rect x="1248" y="107" width="135" height="117" fill="#f0f0f0" stroke="#ccc" filter="url(#sh)"/>
<rect x="1249" y="82" width="29" height="18" fill="#cde4f7" stroke="#2a6fb0"/>
<rect x="1255" y="85" width="12" height="13" fill="#eef4fb" stroke="#446f9c"/><rect x="1255" y="85" width="12" height="5" fill="#7f9fc0"/><path d="M1270 89h6l-3 4z" fill="#111"/><path d="M1268 83v16" stroke="#7fa9d0"/>
<g class="d" style="font-size:10.800px">
<text x="1279" y="119">x,y,z</text><text x="1279" y="137">local index,x,y,z</text><text x="1279" y="157">global index,x,y,z</text>
</g>
<rect x="1250" y="161" width="130" height="22" fill="#90c8f6"/>
<g class="d" style="font-size:10.800px"><text x="1279" y="177">label name,x,y,z</text><text x="1279" y="197">new cloud</text><text x="1279" y="216">new polyline</text></g>

<!-- red annotations -->
<rect x="1241" y="78" width="42" height="26" fill="none" stroke="#ed3b3f" stroke-width="6"/>
<rect x="1250" y="158" width="130" height="25" fill="none" stroke="#ed3b3f" stroke-width="6"/>
<path d="M1287 92L1316 75V86H1354Q1358 86 1358 91 1358 96 1354 96H1316V104Z" fill="#ed3b3f" filter="url(#sh)"/>
<path d="M1383 172L1413 155V165H1452Q1456 165 1456 169.500 1456 174 1452 174H1413V186Z" fill="#ed3b3f" filter="url(#sh)"/>
<text x="1372" y="101" style="font-size:30px;font-weight:bold;fill:#ed3b3f;stroke:#fff;stroke-width:4;paint-order:stroke" filter="url(#sh)">1</text>
<text x="1469" y="181" style="font-size:30px;font-weight:bold;fill:#ed3b3f;stroke:#fff;stroke-width:4;paint-order:stroke" filter="url(#sh)">2</text>

<!-- right toolbar -->
<rect x="1664" y="66" width="53" height="844" fill="#f0f0f0"/>
<path d="M1668 70h48M1668 162h48" stroke="#aaa" stroke-dasharray="1 2"/><path d="M1664 157h53" stroke="#c8c8c8"/>
<circle cx="1692" cy="88" r="9.500" fill="none" stroke="#888" stroke-width="3.500"/><path d="M1685 95l14-14" stroke="#888" stroke-width="3.500"/>
<rect x="1683" y="107" width="18" height="18" fill="#808080"/><path d="M1688 120q0-10 6-10" stroke="#ccc" fill="none"/><text x="1684" y="125" style="font-size:6.500px;font-weight:bold;fill:#fff">EDL</text>
<rect x="1683" y="134" width="18" height="18" fill="#808080"/><path d="M1688 147q0-10 6-10" stroke="#ccc" fill="none"/><text x="1684" y="152" style="font-size:6px;font-weight:bold;fill:#fff">SSAO</text>
<rect x="1682" y="177" width="20" height="15" fill="#7f7f7f"/><rect x="1682" y="172" width="20" height="5" fill="#555"/><path d="M1684 177l2-5M1689 177l2-5M1694 177l2-5M1699 177l2-5" stroke="#ddd"/>
<path d="M1692 197v14" stroke="#bbb" stroke-width="2"/><path d="M1688 210h7l2 8h-10z" fill="#aaa"/>
<rect x="1682" y="223" width="20" height="21" rx="3" fill="#eee" stroke="#777" stroke-width="1.500"/><circle cx="1692" cy="233.500" r="8" fill="#f4f4f4" stroke="#888"/><path d="M1688 239l8-11" stroke="#777" stroke-width="1.500"/>
<path d="M1684 254l8-3 8 3v7q-2 6-8 10-6-4-8-10z" fill="#b5b5b5" stroke="#999"/><path d="M1688 257l4-1 4 1v5q-1 3-4 5-3-2-4-5z" fill="#8a8a8a"/>
<text x="1671" y="278" style="font-size:10px;fill:#8a8a8a" textLength="41" lengthAdjust="spacingAndGlyphs">CSF Filter</text>
<path d="M1687 289h9M1694 287l2 2-2 2" stroke="#333" fill="none"/>
<text x="1686" y="315" style="font-size:18px;fill:#444">N</text>
<path d="M1686 328l6-3 7 3 1 6-5 5h-6l-4-5z" fill="#bdbdbd"/><text x="1684" y="339" style="font-size:6.500px;font-weight:bold;fill:#555">HPR</text>
<text x="1682" y="354" style="font-size:6.500px;fill:#999">M3C2</text><path d="M1684 358q8-3 16 0l1 6h-18z" fill="#bbb"/><g fill="#555"><circle cx="1684" cy="361" r="1"/><circle cx="1690" cy="364" r="1"/><circle cx="1695" cy="358" r="1"/><circle cx="1700" cy="364" r="1"/></g>
<rect x="1683" y="377" width="18" height="18" fill="#888"/><text x="1684" y="395" style="font-size:7px;font-weight:bold;fill:#fff">PCV</text>
<path d="M1692 402l8 5v9l-8 5-8-5v-9z" fill="#9a9a9a"/>
<circle cx="1692" cy="431" r="5" fill="#aaa"/><path d="M1684 432l4-4 8 1 2 5h-14z" fill="#c0c0c0"/><text x="1684" y="443" style="font-size:7px;font-weight:bold;fill:#555">RSD</text>
<ellipse cx="1692" cy="465" rx="10" ry="4.500" fill="#f4f4f4" stroke="#aaa" stroke-dasharray="2 1"/>
</svg>
</body></html>
